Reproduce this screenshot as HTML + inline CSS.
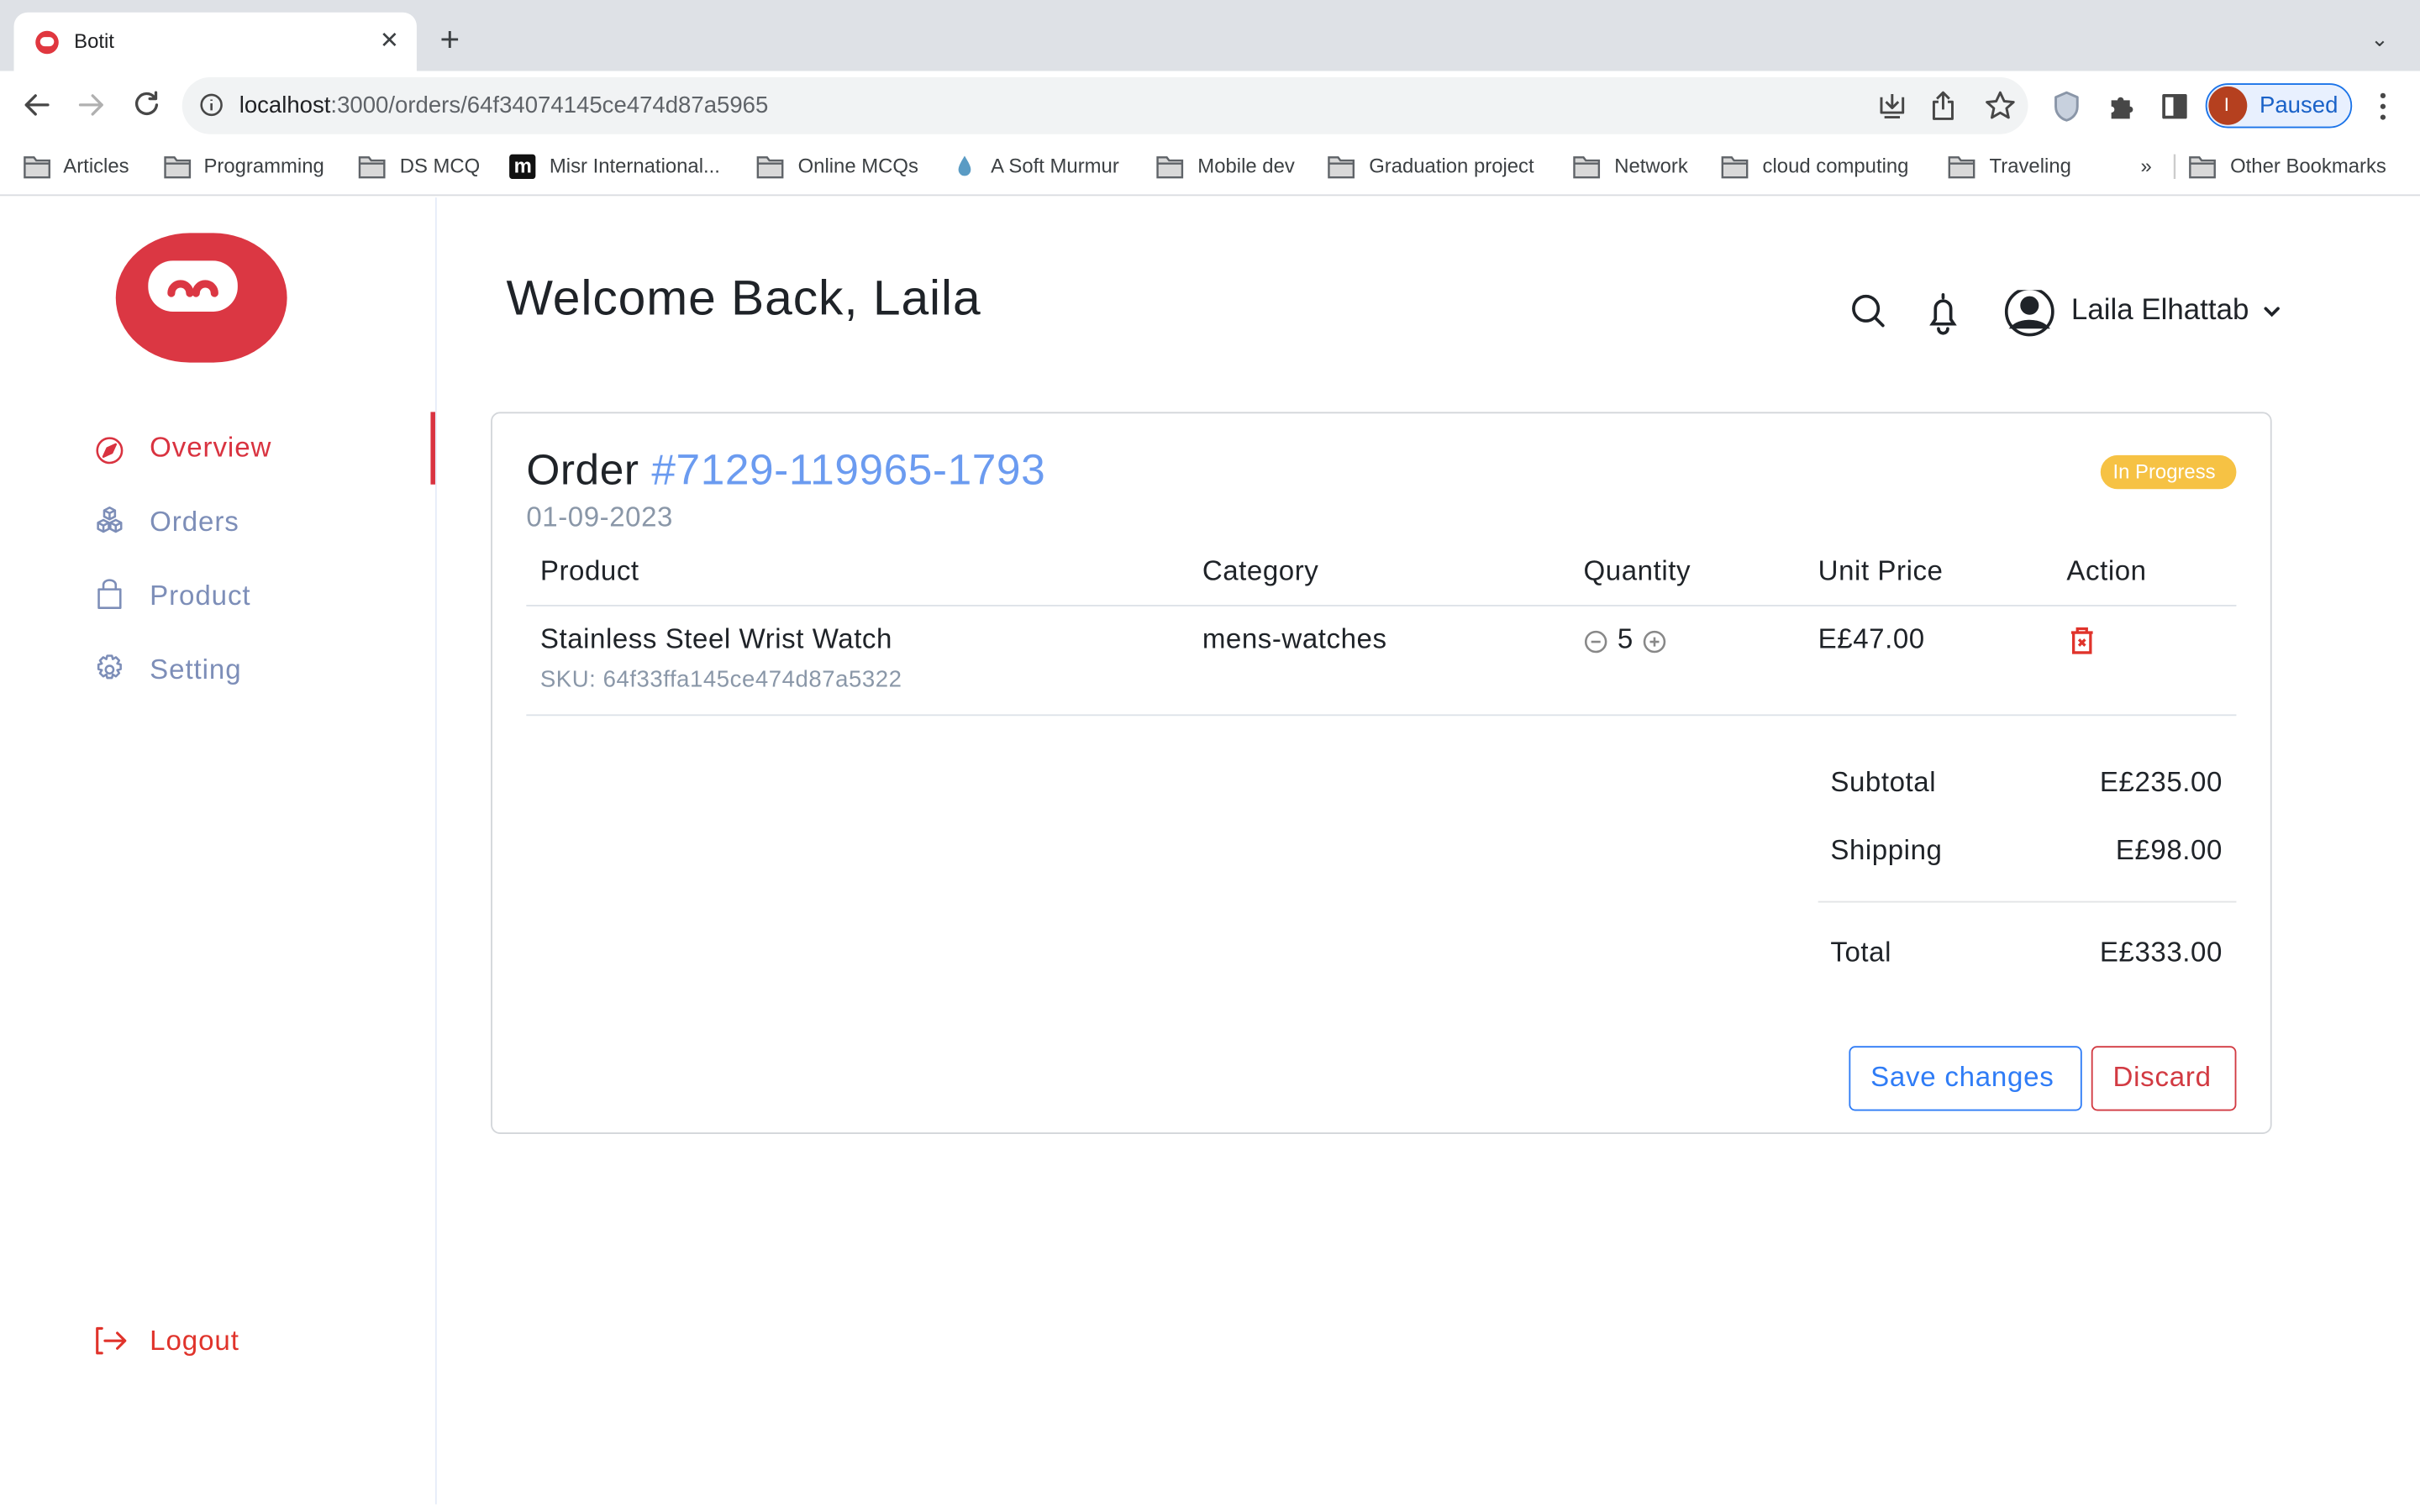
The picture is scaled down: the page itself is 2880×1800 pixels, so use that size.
<!DOCTYPE html>
<html><head><meta charset="utf-8">
<style>
html,body{margin:0;padding:0;width:2880px;height:1800px;overflow:hidden;background:#fff}
#w{position:absolute;left:0;top:0;width:1568px;height:980px;transform:scale(1.83674);transform-origin:0 0;font-family:"Liberation Sans",sans-serif}
.t{position:absolute;white-space:nowrap;line-height:1}
.a{position:absolute}
.bm{position:absolute;top:101px;font-size:13px;color:#3c4043;line-height:14px;white-space:nowrap}
.h{font-size:18px;color:#1f2328;letter-spacing:0.3px}
</style></head><body><div id="w">
<div class="a" style="left:0;top:0;width:1568px;height:46px;background:#dee1e6"></div>
<div class="a" style="left:9px;top:8px;width:261px;height:40px;background:#fff;border-radius:9px 9px 0 0"></div>
<div class="a" style="left:23px;top:20px;width:15px;height:15px;border-radius:50%;background:#e0373f"></div>
<div class="a" style="left:26px;top:24px;width:9px;height:6px;border-radius:3px;background:#fff"></div>
<div class="t" style="left:48px;top:20px;font-size:13px;color:#202124">Botit</div>
<div class="t" style="left:246px;top:19px;font-size:15px;color:#3c4043">✕</div>
<div class="t" style="left:285px;top:15px;font-size:22px;color:#3c4043">+</div>
<div class="t" style="left:1536px;top:18px;font-size:14px;color:#3c4043">⌄</div>
<div class="a" style="left:118px;top:50px;width:1196px;height:37px;background:#f1f3f4;border-radius:19px"></div>
<svg class="a" style="left:14px;top:58px" width="100" height="20" viewBox="0 0 100 20" fill="none" stroke-width="1.8" stroke-linecap="round" stroke-linejoin="round">
<path d="M17 10H3M9 4L3 10l6 6" stroke="#474747"/>
<path d="M38 10h14M46 4l6 6-6 6" stroke="#b0b0b0"/>
<path d="M86 5a6.5 6.5 0 1 0 1.5 5M87 2v4h-4" stroke="#474747"/>
</svg>
<svg class="a" style="left:129px;top:60px" width="16" height="16" viewBox="0 0 16 16" fill="none" stroke="#474747" stroke-width="1.4"><circle cx="8" cy="8" r="6.5"/><path d="M8 7v4.5M8 4.5v.8"/></svg>
<div class="t" style="left:155px;top:61px;font-size:15px;color:#202124">localhost<span style="color:#5f6368">:3000/orders/64f34074145ce474d87a5965</span></div>
<svg class="a" style="left:1216px;top:58px" width="340" height="22" viewBox="0 0 340 22" fill="none" stroke="#474747" stroke-width="1.6" stroke-linejoin="round">
<path d="M3 5v10h14V5M10 3v9M6 8l4 4 4-4M5 18h10"/>
<path d="M40 8h-3v11h12V8h-3M43 2v11M39 6l4-4 4 4"/>
<path d="M80 2l2.6 5.6 6 .6-4.5 4 1.3 6-5.4-3.1-5.4 3.1 1.3-6-4.5-4 6-.6z"/>
<path d="M123 2l7 3v6c0 5-3.5 8-7 9-3.5-1-7-4-7-9V5z" stroke="#8a96a8" fill="#c8d1de"/>
<path d="M152 7h4a2 2 0 1 1 4 0h4v4a2 2 0 1 1 0 4v4h-12v-4a2 2 0 1 0 0-4z" fill="#474747" stroke="none"/>
<rect x="186" y="4" width="14" height="14" stroke-width="2"/><rect x="193" y="4" width="7" height="14" fill="#474747"/>
<circle cx="328" cy="4" r="1.7" fill="#474747" stroke="none"/><circle cx="328" cy="11" r="1.7" fill="#474747" stroke="none"/><circle cx="328" cy="18" r="1.7" fill="#474747" stroke="none"/>
</svg>
<div class="a" style="left:1429px;top:54px;width:93px;height:27px;border:1.5px solid #1a73e8;border-radius:15px;background:#e8f0fe"></div>
<div class="a" style="left:1431px;top:56px;width:25px;height:25px;border-radius:50%;background:#b5401f"></div>
<div class="t" style="left:1441px;top:62px;font-size:12px;color:#fff">I</div>
<div class="t" style="left:1464px;top:61px;font-size:15px;color:#1a62c8">Paused</div>
<div class="a" style="left:0;top:126px;width:1568px;height:1px;background:#dadce0"></div>
<svg class="a" style="left:0;top:100px" width="1568" height="16" viewBox="0 0 1568 16" fill="#d9d9d9" stroke="#5f6368" stroke-width="1.3">
<g id="f"><path d="M16 2h6l1.5 2H32v11H16z"/><path d="M16 6h16" fill="none"/></g>
<use href="#f" x="91"/><use href="#f" x="217"/><use href="#f" x="475"/><use href="#f" x="734"/><use href="#f" x="845"/><use href="#f" x="1004"/><use href="#f" x="1100"/><use href="#f" x="1247"/><use href="#f" x="1403"/>
<rect x="330" y="0" width="17" height="16" rx="2" fill="#111" stroke="none"/>
<path d="M625 1c-3 5-4 7-4 9a4 4 0 0 0 8 0c0-2-1-4-4-9z" fill="#5a9bc4" stroke="none"/>
<path d="M1409 -2v18" stroke="#ccc"/>
</svg>
<div class="t" style="left:333px;top:101px;font-size:13px;color:#fff;font-weight:bold">m</div>
<div class="bm" style="left:41px">Articles</div>
<div class="bm" style="left:132px">Programming</div>
<div class="bm" style="left:259px">DS MCQ</div>
<div class="bm" style="left:356px">Misr International...</div>
<div class="bm" style="left:517px">Online MCQs</div>
<div class="bm" style="left:642px">A Soft Murmur</div>
<div class="bm" style="left:776px">Mobile dev</div>
<div class="bm" style="left:887px">Graduation project</div>
<div class="bm" style="left:1046px">Network</div>
<div class="bm" style="left:1142px">cloud computing</div>
<div class="bm" style="left:1289px">Traveling</div>
<div class="bm" style="left:1387px">»</div>
<div class="bm" style="left:1445px">Other Bookmarks</div>
<div class="a" style="left:282px;top:128px;width:1px;height:847px;background:#e6ecf8"></div>
<div class="a" style="left:279px;top:267px;width:3px;height:47px;background:#d93340"></div>
<div class="a" style="left:75px;top:151px;width:111px;height:84px;border-radius:48px/42px;background:#db3743"></div>
<div class="a" style="left:96px;top:169px;width:58px;height:33px;border-radius:16px;background:#fff"></div>
<svg class="a" style="left:96px;top:169px" width="58" height="33" viewBox="0 0 58 33" fill="none" stroke="#db3743" stroke-width="5" stroke-linecap="round"><path d="M15 21a6 6 0 0 1 12 0M31 21a6 6 0 0 1 12 0"/></svg>
<svg class="a" style="left:60px;top:279px" width="24" height="170" viewBox="0 0 24 170" fill="none" stroke-width="1.4" stroke-linejoin="round">
<circle cx="11" cy="13" r="8" stroke="#d93340"/><path d="M15 9l-2.5 5.5L7 17l2.5-5.5z" stroke="#d93340" fill="#d93340"/>
<g stroke="#7d8eb8"><path d="M11 50l3.5 1.8v4L11 57.6l-3.5-1.8v-4zM7.5 51.8L11 53.6l3.5-1.8M11 53.6v4"/>
<path d="M7 58l3.5 1.8v4L7 65.6l-3.5-1.8v-4zM3.5 59.8L7 61.6l3.5-1.8M7 61.6v4"/>
<path d="M15 58l3.5 1.8v4L15 65.6l-3.5-1.8v-4zM11.5 59.8L15 61.6l3.5-1.8M15 61.6v4"/>
<path d="M4 103h14v12H4zM7 103v-3a4 3 0 0 1 8 0v3"/>
<circle cx="11" cy="155" r="2.5"/><path d="M9.5 146h3l.6 2.2 2-1.2 2.1 2.1-1.2 2 2.2.6v3l-2.2.6 1.2 2-2.1 2.1-2-1.2-.6 2.2h-3l-.6-2.2-2 1.2-2.1-2.1 1.2-2-2.2-.6v-3l2.2-.6-1.2-2 2.1-2.1 2 1.2z"/></g>
</svg>
<div class="t" style="left:97px;top:281px;font-size:18px;color:#d93340;letter-spacing:0.5px">Overview</div>
<div class="t" style="left:97px;top:329px;font-size:18px;color:#7d8eb8;letter-spacing:0.5px">Orders</div>
<div class="t" style="left:97px;top:377px;font-size:18px;color:#7d8eb8;letter-spacing:0.5px">Product</div>
<div class="t" style="left:97px;top:425px;font-size:18px;color:#7d8eb8;letter-spacing:0.5px">Setting</div>
<svg class="a" style="left:61px;top:859px" width="22" height="20" viewBox="0 0 22 20" fill="none" stroke="#e0332b" stroke-width="1.7" stroke-linecap="round" stroke-linejoin="round"><path d="M5 2H2v16h3M7 10h13M15 5l5 5-5 5"/></svg>
<div class="t" style="left:97px;top:860px;font-size:18px;color:#e0332b;letter-spacing:0.5px">Logout</div>
<div class="t" style="left:328px;top:177px;font-size:32px;color:#1f2328;letter-spacing:0.5px">Welcome Back, Laila</div>
<svg class="a" style="left:1198px;top:188px" width="290" height="32" viewBox="0 0 290 32" fill="none" stroke="#1f2328" stroke-width="2" stroke-linecap="round">
<circle cx="11" cy="12" r="8"/><path d="M17 18l5 5"/>
<path d="M54 22h14l-2-3v-7a5 5 0 0 0-10 0v7zM61 3v2M58 25a3 3 0 0 0 6 0"/>
<circle cx="117" cy="14" r="15"/><circle cx="117" cy="10" r="5" fill="#1f2328"/><path d="M106 24a13 8 0 0 1 22 0z" fill="#1f2328"/>
<path d="M270 12l4 4 4-4"/>
</svg>
<div class="t" style="left:1342px;top:192px;font-size:19px;color:#1f2328">Laila Elhattab</div>
<div class="a" style="left:318px;top:267px;width:1152px;height:466px;border:1px solid #d3d6da;border-radius:6px"></div>
<div class="t" style="left:341px;top:291px;font-size:28px;color:#1f2328;letter-spacing:0.3px">Order <span style="color:#6b9bf0">#7129-119965-1793</span></div>
<div class="t" style="left:341px;top:326px;font-size:18px;color:#8a97a8;letter-spacing:0.3px">01-09-2023</div>
<div class="a" style="left:1361px;top:295px;width:88px;height:22px;border-radius:11px;background:#f6c244"></div>
<div class="t" style="left:1369px;top:299px;font-size:13px;color:#fff">In Progress</div>
<div class="t h" style="left:350px;top:361px">Product</div>
<div class="t h" style="left:779px;top:361px">Category</div>
<div class="t h" style="left:1026px;top:361px">Quantity</div>
<div class="t h" style="left:1178px;top:361px">Unit Price</div>
<div class="t h" style="left:1339px;top:361px">Action</div>
<div class="a" style="left:341px;top:392px;width:1108px;height:1px;background:#dde2e8"></div>
<div class="t h" style="left:350px;top:405px">Stainless Steel Wrist Watch</div>
<div class="t h" style="left:779px;top:405px">mens-watches</div>
<div class="t h" style="left:1048px;top:405px">5</div>
<div class="t h" style="left:1178px;top:405px">E£47.00</div>
<svg class="a" style="left:1026px;top:406px" width="340" height="20" viewBox="0 0 340 20" fill="none" stroke-width="1.4">
<g stroke="#888"><circle cx="8" cy="10" r="6.5"/><path d="M5 10h6"/><circle cx="46" cy="10" r="6.5"/><path d="M43 10h6M46 7v6"/></g>
<g stroke="#e0332b" stroke-width="1.8"><path d="M316 4h14M320 4V1.5h6V4M317.5 4v13h11V4M321 8.5l4 4M325 8.5l-4 4"/></g>
</svg>
<div class="t" style="left:350px;top:433px;font-size:15px;color:#8a97a8;letter-spacing:0.3px">SKU: 64f33ffa145ce474d87a5322</div>
<div class="a" style="left:341px;top:463px;width:1108px;height:1px;background:#dde2e8"></div>
<div class="t h" style="left:1186px;top:498px">Subtotal</div>
<div class="t h" style="right:128px;top:498px">E£235.00</div>
<div class="t h" style="left:1186px;top:542px">Shipping</div>
<div class="t h" style="right:128px;top:542px">E£98.00</div>
<div class="a" style="left:1178px;top:584px;width:271px;height:1px;background:#e2e4e6"></div>
<div class="t h" style="left:1186px;top:608px">Total</div>
<div class="t h" style="right:128px;top:608px">E£333.00</div>
<div class="a" style="left:1198px;top:678px;width:149px;height:40px;border:1px solid #2f7cf6;border-radius:4px"></div>
<div class="t" style="left:1212px;top:689px;font-size:18px;color:#2f7cf6;letter-spacing:0.4px">Save changes</div>
<div class="a" style="left:1355px;top:678px;width:92px;height:40px;border:1px solid #d23a42;border-radius:4px"></div>
<div class="t" style="left:1369px;top:689px;font-size:18px;color:#d23a42;letter-spacing:0.4px">Discard</div>
</div></body></html>
